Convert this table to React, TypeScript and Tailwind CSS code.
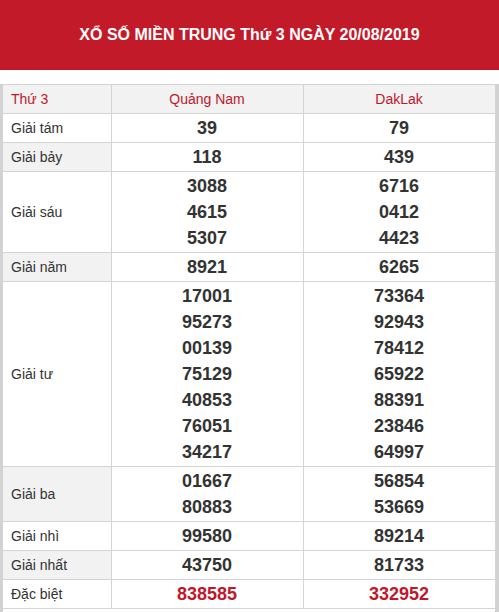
const rows: Array<{ label: string; a: string[]; b: string[]; special?: boolean }> = [
  { label: 'Giải tám', a: ['39'], b: ['79'] },
  { label: 'Giải bảy', a: ['118'], b: ['439'] },
  { label: 'Giải sáu', a: ['3088', '4615', '5307'], b: ['6716', '0412', '4423'] },
  { label: 'Giải năm', a: ['8921'], b: ['6265'] },
  {
    label: 'Giải tư',
    a: ['17001', '95273', '00139', '75129', '40853', '76051', '34217'],
    b: ['73364', '92943', '78412', '65922', '88391', '23846', '64997'],
  },
  { label: 'Giải ba', a: ['01667', '80883'], b: ['56854', '53669'] },
  { label: 'Giải nhì', a: ['99580'], b: ['89214'] },
  { label: 'Giải nhất', a: ['43750'], b: ['81733'] },
  { label: 'Đặc biệt', a: ['838585'], b: ['332952'], special: true },
]

function Numbers({ values, special }: { values: string[]; special?: boolean }) {
  return (
    <td className="border border-[#d4d4d4] py-px text-center align-middle">
      {values.map((v) => (
        <div
          key={v}
          className={`h-[26px] leading-[26px] text-[18px] font-bold ${
            special ? 'text-[#c1172b]' : 'text-[#333333]'
          }`}
        >
          {v}
        </div>
      ))}
    </td>
  )
}

export default function App() {
  return (
    <div className="w-[499px] bg-white font-['Liberation_Sans',Arial,sans-serif]">
      {/* Title band */}
      <div className="flex h-[70px] items-center justify-center bg-[#c31a29]">
        <h1 className="text-[16px] font-bold text-white">XỔ SỐ MIỀN TRUNG Thứ 3 NGÀY 20/08/2019</h1>
      </div>

      <div className="mt-[14px] border-l-[3px] border-r-[4px] border-[#d2d2d2] pb-[4px]">
        <table className="w-[492px] table-fixed border-collapse">
          <colgroup>
            <col className="w-[108px]" />
            <col className="w-[192px]" />
            <col className="w-[192px]" />
          </colgroup>
          <thead>
            <tr className="h-[29px] bg-[#f2f2f2] text-[14px] text-[#c1172b]">
              <th className="border border-l-0 border-[#d4d4d4] pl-[8px] text-left font-normal">Thứ 3</th>
              <th className="border border-[#d4d4d4] text-center font-normal">Quảng Nam</th>
              <th className="border border-[#d4d4d4] text-center font-normal">DakLak</th>
            </tr>
          </thead>
          <tbody>
            {rows.map((r, i) => (
              <tr key={r.label}>
                <td
                  className={`border border-l-0 border-[#d4d4d4] pl-[8px] align-middle text-[14px] text-[#333333] ${
                    i % 2 === 1 ? 'bg-[#f2f2f2]' : 'bg-white'
                  }`}
                >
                  {r.label}
                </td>
                <Numbers values={r.a} special={r.special} />
                <Numbers values={r.b} special={r.special} />
              </tr>
            ))}
          </tbody>
        </table>
      </div>
    </div>
  )
}
